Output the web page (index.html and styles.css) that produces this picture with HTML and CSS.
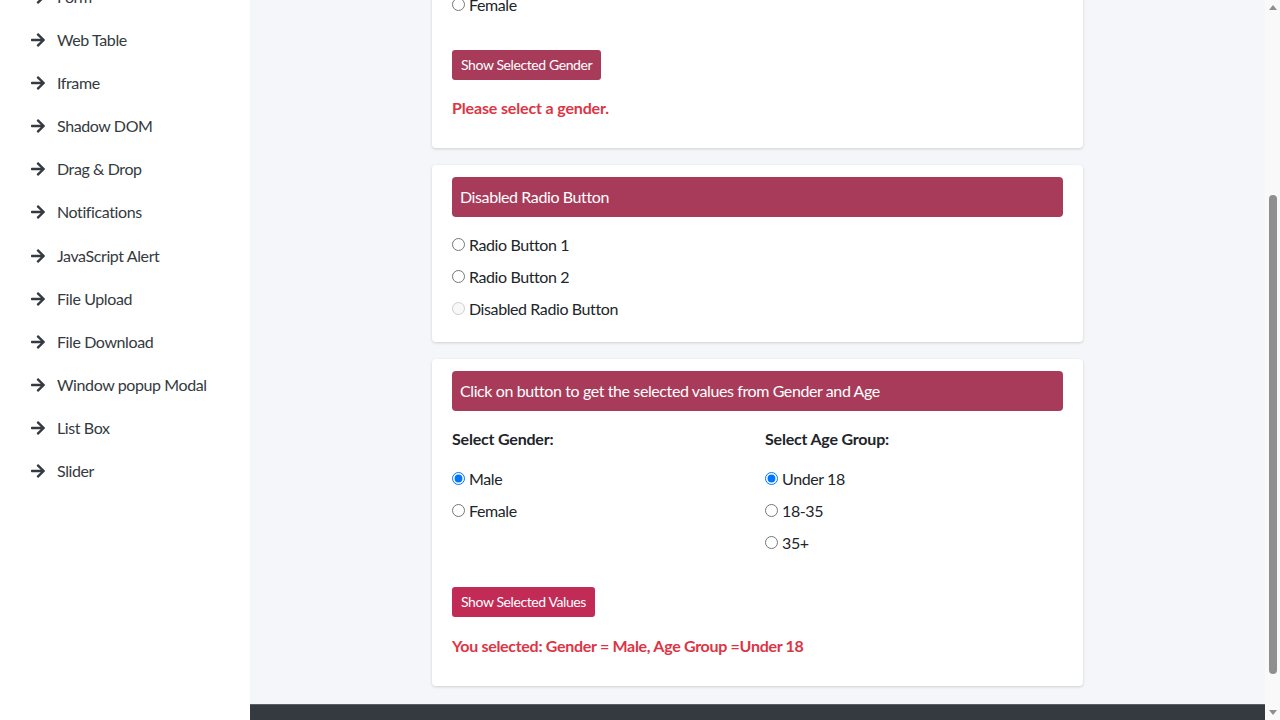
FILE: index.html
```html
<!DOCTYPE html>
<html lang="en">
<head>
<meta charset="utf-8">
<title>Radio Buttons</title>
<link rel="stylesheet" href="styles.css">
</head>
<body>
<div class="layout">
  <aside class="sidebar">
    <ul class="nav">
      <li><svg class="arrow" viewBox="0 0 448 512"><path d="M190.5 66.9l22.2-22.2c9.4-9.4 24.6-9.4 33.9 0L441 239c9.4 9.4 9.4 24.6 0 33.9L246.6 467.3c-9.4 9.4-24.6 9.4-33.9 0l-22.2-22.2c-9.5-9.5-9.3-25 .4-34.3L311.4 296H24c-13.3 0-24-10.7-24-24v-32c0-13.3 10.7-24 24-24h287.4L190.9 101.2c-9.8-9.3-10-24.8-.4-34.3z"/></svg><span>Form</span></li>
      <li><svg class="arrow" viewBox="0 0 448 512"><path d="M190.5 66.9l22.2-22.2c9.4-9.4 24.6-9.4 33.9 0L441 239c9.4 9.4 9.4 24.6 0 33.9L246.6 467.3c-9.4 9.4-24.6 9.4-33.9 0l-22.2-22.2c-9.5-9.5-9.3-25 .4-34.3L311.4 296H24c-13.3 0-24-10.7-24-24v-32c0-13.3 10.7-24 24-24h287.4L190.9 101.2c-9.8-9.3-10-24.8-.4-34.3z"/></svg><span>Web Table</span></li>
      <li><svg class="arrow" viewBox="0 0 448 512"><path d="M190.5 66.9l22.2-22.2c9.4-9.4 24.6-9.4 33.9 0L441 239c9.4 9.4 9.4 24.6 0 33.9L246.6 467.3c-9.4 9.4-24.6 9.4-33.9 0l-22.2-22.2c-9.5-9.5-9.3-25 .4-34.3L311.4 296H24c-13.3 0-24-10.7-24-24v-32c0-13.3 10.7-24 24-24h287.4L190.9 101.2c-9.8-9.3-10-24.8-.4-34.3z"/></svg><span>Iframe</span></li>
      <li><svg class="arrow" viewBox="0 0 448 512"><path d="M190.5 66.9l22.2-22.2c9.4-9.4 24.6-9.4 33.9 0L441 239c9.4 9.4 9.4 24.6 0 33.9L246.6 467.3c-9.4 9.4-24.6 9.4-33.9 0l-22.2-22.2c-9.5-9.5-9.3-25 .4-34.3L311.4 296H24c-13.3 0-24-10.7-24-24v-32c0-13.3 10.7-24 24-24h287.4L190.9 101.2c-9.8-9.3-10-24.8-.4-34.3z"/></svg><span>Shadow DOM</span></li>
      <li><svg class="arrow" viewBox="0 0 448 512"><path d="M190.5 66.9l22.2-22.2c9.4-9.4 24.6-9.4 33.9 0L441 239c9.4 9.4 9.4 24.6 0 33.9L246.6 467.3c-9.4 9.4-24.6 9.4-33.9 0l-22.2-22.2c-9.5-9.5-9.3-25 .4-34.3L311.4 296H24c-13.3 0-24-10.7-24-24v-32c0-13.3 10.7-24 24-24h287.4L190.9 101.2c-9.8-9.3-10-24.8-.4-34.3z"/></svg><span>Drag &amp; Drop</span></li>
      <li><svg class="arrow" viewBox="0 0 448 512"><path d="M190.5 66.9l22.2-22.2c9.4-9.4 24.6-9.4 33.9 0L441 239c9.4 9.4 9.4 24.6 0 33.9L246.6 467.3c-9.4 9.4-24.6 9.4-33.9 0l-22.2-22.2c-9.5-9.5-9.3-25 .4-34.3L311.4 296H24c-13.3 0-24-10.7-24-24v-32c0-13.3 10.7-24 24-24h287.4L190.9 101.2c-9.8-9.3-10-24.8-.4-34.3z"/></svg><span>Notifications</span></li>
      <li><svg class="arrow" viewBox="0 0 448 512"><path d="M190.5 66.9l22.2-22.2c9.4-9.4 24.6-9.4 33.9 0L441 239c9.4 9.4 9.4 24.6 0 33.9L246.6 467.3c-9.4 9.4-24.6 9.4-33.9 0l-22.2-22.2c-9.5-9.5-9.3-25 .4-34.3L311.4 296H24c-13.3 0-24-10.7-24-24v-32c0-13.3 10.7-24 24-24h287.4L190.9 101.2c-9.8-9.3-10-24.8-.4-34.3z"/></svg><span>JavaScript Alert</span></li>
      <li><svg class="arrow" viewBox="0 0 448 512"><path d="M190.5 66.9l22.2-22.2c9.4-9.4 24.6-9.4 33.9 0L441 239c9.4 9.4 9.4 24.6 0 33.9L246.6 467.3c-9.4 9.4-24.6 9.4-33.9 0l-22.2-22.2c-9.5-9.5-9.3-25 .4-34.3L311.4 296H24c-13.3 0-24-10.7-24-24v-32c0-13.3 10.7-24 24-24h287.4L190.9 101.2c-9.8-9.3-10-24.8-.4-34.3z"/></svg><span>File Upload</span></li>
      <li><svg class="arrow" viewBox="0 0 448 512"><path d="M190.5 66.9l22.2-22.2c9.4-9.4 24.6-9.4 33.9 0L441 239c9.4 9.4 9.4 24.6 0 33.9L246.6 467.3c-9.4 9.4-24.6 9.4-33.9 0l-22.2-22.2c-9.5-9.5-9.3-25 .4-34.3L311.4 296H24c-13.3 0-24-10.7-24-24v-32c0-13.3 10.7-24 24-24h287.4L190.9 101.2c-9.8-9.3-10-24.8-.4-34.3z"/></svg><span>File Download</span></li>
      <li><svg class="arrow" viewBox="0 0 448 512"><path d="M190.5 66.9l22.2-22.2c9.4-9.4 24.6-9.4 33.9 0L441 239c9.4 9.4 9.4 24.6 0 33.9L246.6 467.3c-9.4 9.4-24.6 9.4-33.9 0l-22.2-22.2c-9.5-9.5-9.3-25 .4-34.3L311.4 296H24c-13.3 0-24-10.7-24-24v-32c0-13.3 10.7-24 24-24h287.4L190.9 101.2c-9.8-9.3-10-24.8-.4-34.3z"/></svg><span>Window popup Modal</span></li>
      <li><svg class="arrow" viewBox="0 0 448 512"><path d="M190.5 66.9l22.2-22.2c9.4-9.4 24.6-9.4 33.9 0L441 239c9.4 9.4 9.4 24.6 0 33.9L246.6 467.3c-9.4 9.4-24.6 9.4-33.9 0l-22.2-22.2c-9.5-9.5-9.3-25 .4-34.3L311.4 296H24c-13.3 0-24-10.7-24-24v-32c0-13.3 10.7-24 24-24h287.4L190.9 101.2c-9.8-9.3-10-24.8-.4-34.3z"/></svg><span>List Box</span></li>
      <li><svg class="arrow" viewBox="0 0 448 512"><path d="M190.5 66.9l22.2-22.2c9.4-9.4 24.6-9.4 33.9 0L441 239c9.4 9.4 9.4 24.6 0 33.9L246.6 467.3c-9.4 9.4-24.6 9.4-33.9 0l-22.2-22.2c-9.5-9.5-9.3-25 .4-34.3L311.4 296H24c-13.3 0-24-10.7-24-24v-32c0-13.3 10.7-24 24-24h287.4L190.9 101.2c-9.8-9.3-10-24.8-.4-34.3z"/></svg><span>Slider</span></li>
    </ul>
  </aside>

  <div class="main">
    <div class="content">
      <section class="card card-cut">
        <label class="radio"><input type="radio" name="g1"> Female</label>
        <button class="btn btn-dark-pink" type="button">Show Selected Gender</button>
        <p class="result">Please select a gender.</p>
      </section>

      <section class="card card-short">
        <div class="card-header">Disabled Radio Button</div>
        <div class="radio-list">
          <label class="radio"><input type="radio" name="d1"> Radio Button 1</label>
          <label class="radio"><input type="radio" name="d1"> Radio Button 2</label>
          <label class="radio disabled"><input type="radio" name="d1" disabled> Disabled Radio Button</label>
        </div>
      </section>

      <section class="card">
        <div class="card-header">Click on button to get the selected values from Gender and Age</div>
        <div class="two-col">
          <div class="col">
            <h4 class="col-title">Select Gender:</h4>
            <div class="radio-list">
              <label class="radio"><input type="radio" name="g2" checked> Male</label>
              <label class="radio"><input type="radio" name="g2"> Female</label>
            </div>
          </div>
          <div class="col">
            <h4 class="col-title">Select Age Group:</h4>
            <div class="radio-list">
              <label class="radio"><input type="radio" name="a2" checked> Under 18</label>
              <label class="radio"><input type="radio" name="a2"> 18-35</label>
              <label class="radio"><input type="radio" name="a2"> 35+</label>
            </div>
          </div>
        </div>
        <button class="btn btn-pink btn-values" type="button">Show Selected Values</button>
        <p class="result result-values">You selected: Gender = Male, Age Group =Under 18</p>
      </section>
    </div>
    <footer class="footer"></footer>
  </div>

  <div class="scrollbar">
    <div class="sb-up"></div>
    <div class="sb-track"><div class="sb-thumb"></div></div>
    <div class="sb-down"></div>
  </div>
</div>
</body>
</html>
```

FILE: styles.css
```css
* { box-sizing: border-box; }
html, body {
  margin: 0;
  padding: 0;
  height: 720px;
  overflow: hidden;
}
body {
  font-family: Lato, "Noto Sans", "Liberation Sans", sans-serif;
  font-size: 16px;
  line-height: 1.5;
  letter-spacing: -0.4px;
  color: #212529;
  background: #f5f6fa;
}
.layout {
  display: flex;
  height: 720px;
}
.sidebar {
  width: 250px;
  flex: 0 0 250px;
  background: #ffffff;
  overflow: hidden;
}
.nav {
  list-style: none;
  margin: -24.6px 0 0 0;
  padding: 0 0 0 30px;
}
.nav li {
  display: flex;
  align-items: center;
  gap: 11px;
  padding: 9.55px 0;
  color: #343a40;
  font-size: 16px;
  line-height: 24px;
}
.arrow {
  width: 16px;
  height: 16px;
  fill: #343a40;
  flex: 0 0 16px;
}
.main {
  flex: 1;
  display: flex;
  flex-direction: column;
  background: #f5f6fa;
  overflow: hidden;
}
.content {
  display: flex;
  flex-direction: column;
  align-items: center;
}
.card {
  width: 651px;
  background: #ffffff;
  border-radius: 4px;
  box-shadow: 0 1px 3px rgba(0, 0, 0, 0.16);
  padding: 12px 20px 28px;
  margin-bottom: 17px;
  display: flex;
  flex-direction: column;
  align-items: flex-start;
}
.card-cut {
  margin-top: -19px;
}
.card-short {
  padding-bottom: 21px;
}
.card-header {
  align-self: stretch;
  background: #a83b5a;
  color: #ffffff;
  border-radius: 4px;
  padding: 8px 8px;
  line-height: 24px;
  font-size: 16px;
  margin-bottom: 16px;
}
.radio-list {
  display: flex;
  flex-direction: column;
  gap: 8px;
}
.radio {
  display: flex;
  align-items: center;
  line-height: 24px;
  height: 24px;
  color: #212529;
  gap: 4px;
}
.radio input {
  margin: 0;
  width: 13px;
  height: 13px;
  position: relative;
  top: -1px;
}
.two-col {
  align-self: stretch;
  display: grid;
  grid-template-columns: 1fr 1fr;
  column-gap: 15px;
}
.col-title {
  margin: 0 0 16px;
  font-size: 16px;
  font-weight: 700;
  line-height: 24px;
  letter-spacing: -0.2px;
  color: #212529;
}
.btn {
  font-family: inherit;
  font-size: 14px;
  line-height: 20px;
  letter-spacing: -0.4px;
  color: #ffffff;
  border: none;
  border-radius: 3px;
  padding: 5px 9px;
  height: 30px;
  margin-top: 33px;
  cursor: pointer;
}
.btn-dark-pink { background: #a83b5a; }
.btn-pink { background: #c32b57; }
.btn-values { margin-top: 32px; }
.result {
  margin: 16px 0 0;
  color: #dc3545;
  font-weight: 700;
  line-height: 24px;
  letter-spacing: -0.15px;
}
.result-values { margin-top: 17px; letter-spacing: -0.3px; }
.footer {
  margin-top: 1px;
  background: #343a40;
  border-top: 1px solid #5a6067;
  flex: 1;
  min-height: 16px;
}
.scrollbar {
  width: 15px;
  flex: 0 0 15px;
  background: #f9f9f9;
  display: flex;
  flex-direction: column;
  align-items: center;
}
.sb-up, .sb-down {
  height: 15px;
  width: 15px;
  display: flex;
  justify-content: center;
  align-items: center;
}
.sb-up::before {
  content: "";
  border-left: 4.5px solid transparent;
  border-right: 4.5px solid transparent;
  border-bottom: 5px solid #8f8f8f;
}
.sb-down::before {
  content: "";
  border-left: 4.5px solid transparent;
  border-right: 4.5px solid transparent;
  border-top: 5px solid #8f8f8f;
}
.sb-track {
  flex: 1;
  width: 15px;
  display: flex;
  flex-direction: column;
  align-items: center;
  padding-top: 180px;
}
.sb-thumb {
  width: 8px;
  height: 479px;
  background: #8f8f8f;
  border-radius: 4px;
}
```
